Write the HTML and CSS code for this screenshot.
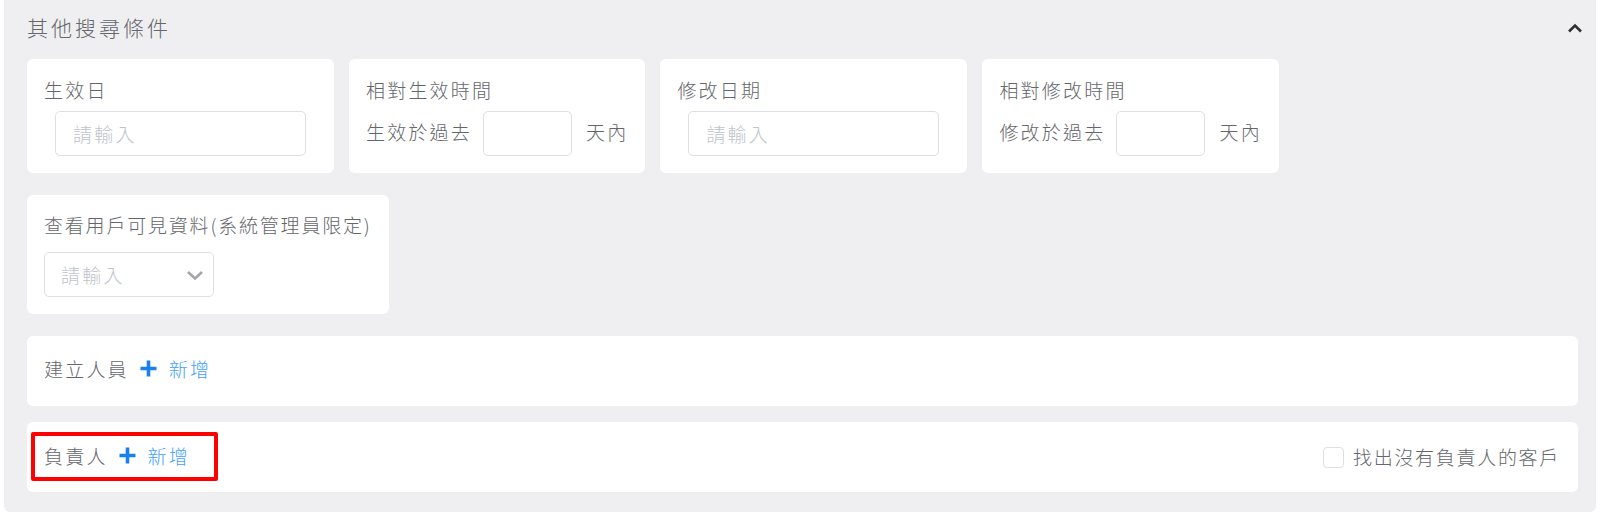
FILE: index.html
```html
<!DOCTYPE html>
<html lang="zh-Hant">
<head>
    <meta charset="UTF-8">
    <meta name="viewport" content="width=device-width, initial-scale=1.0">
    <title>其他搜尋條件</title>
    <link rel="stylesheet" href="styles.css">
</head>
<body>
    <div class="panel">
        <div class="panel-header">
            <h2>其他搜尋條件</h2>
            <svg class="collapse" width="16" height="10" viewBox="0 0 16 10">
                <path d="M2 8.5 L8 2.5 L14 8.5" fill="none" stroke="#303133" stroke-width="2.6"/>
            </svg>
        </div>

        <div class="panel-body">
            <!-- date filters -->
            <div class="card-row">
                <div class="card">
                    <label>生效日</label>
                    <input type="text" class="date-input" placeholder="請輸入">
                </div>
                <div class="card">
                    <label>相對生效時間</label>
                    <div class="range">
                        <span>生效於過去</span>
                        <input type="text" class="days">
                        <span>天內</span>
                    </div>
                </div>
                <div class="card">
                    <label>修改日期</label>
                    <input type="text" class="date-input" placeholder="請輸入">
                </div>
                <div class="card">
                    <label>相對修改時間</label>
                    <div class="range">
                        <span>修改於過去</span>
                        <input type="text" class="days">
                        <span>天內</span>
                    </div>
                </div>
            </div>

            <!-- admin only -->
            <div class="card-row">
                <div class="card card-tall">
                    <label>查看用戶可見資料(系統管理員限定)</label>
                    <div class="select">
                        <span>請輸入</span>
                        <svg width="18" height="11" viewBox="0 0 18 11">
                            <path d="M2 2 L9 8.5 L16 2" fill="none" stroke="#a3a6ad" stroke-width="2.6"/>
                        </svg>
                    </div>
                </div>
            </div>

            <!-- people -->
            <div class="bar">
                <span class="bar-label">建立人員</span>
                <a class="add-link">
                    <svg width="17" height="17" viewBox="0 0 17 17">
                        <path d="M8.5 0.5v16M0.5 8.5h16" stroke="#1a7ff0" stroke-width="3.6"/>
                    </svg>
                    <span>新增</span>
                </a>
            </div>
            <div class="bar bar-owner">
                <div class="highlight">
                    <span class="bar-label">負責人</span>
                    <a class="add-link">
                        <svg width="17" height="17" viewBox="0 0 17 17">
                            <path d="M8.5 0.5v16M0.5 8.5h16" stroke="#1a7ff0" stroke-width="3.6"/>
                        </svg>
                        <span>新增</span>
                    </a>
                </div>
                <label class="check">
                    <span class="box"></span>
                    <span>找出沒有負責人的客戶</span>
                </label>
            </div>
        </div>
    </div>
</body>
</html>
```

FILE: styles.css
```css
body {
    margin: 0;
    background: #fff;
    font-family: "Noto Sans CJK TC", "Noto Sans", sans-serif;
    font-weight: 300;
    color: #64666b;
}
.panel {
    margin: 0 4px;
    background: #efeff1;
    border-radius: 0 0 6px 6px;
    padding-bottom: 20px;
}
.panel-header {
    display: flex;
    justify-content: space-between;
    align-items: center;
    height: 53px;
    margin-bottom: 6px;
    padding: 0 13px 0 23px;
}
.panel-header h2 {
    margin: 0;
    font-size: 21px;
    font-weight: 300;
    letter-spacing: 3px;
    color: #64666b;
}
.collapse {
    margin-top: 3px;
}
.panel-body {
    padding: 0 18px 0 23px;
}
.card-row {
    display: flex;
    gap: 15px;
    margin-bottom: 22px;
}
.card {
    background: #fff;
    border-radius: 6px;
    padding: 18px 17px 17px 17px;
    font-size: 19px;
    letter-spacing: 2.2px;
}
.card label {
    display: block;
    line-height: 25px;
    margin-bottom: 9px;
}
.card-tall {
    padding-top: 17px;
}
.card-tall label {
    margin-bottom: 15px;
    letter-spacing: 1.8px;
}
input {
    box-sizing: border-box;
    height: 45px;
    border: 1px solid #dcdfe6;
    border-radius: 5px;
    font-family: inherit;
    font-size: 19px;
    font-weight: 300;
    letter-spacing: 2.2px;
    color: #606266;
    padding: 0 17px;
    outline: none;
}
input::placeholder {
    color: #c0c4cc;
}
.date-input {
    display: block;
    width: 251px;
    margin: 0 11px;
}
.range {
    display: flex;
    align-items: center;
    height: 45px;
}
.range span {
    line-height: 25px;
    margin-top: -4px;
}
.days {
    width: 89px;
    margin: 0 14px 0 11px;
}
.select {
    box-sizing: border-box;
    width: 170px;
    height: 45px;
    border: 1px solid #dcdfe6;
    border-radius: 5px;
    display: flex;
    justify-content: space-between;
    align-items: center;
    padding: 0 9px 0 16px;
    color: #c0c4cc;
}
.select svg {
    margin-top: 1px;
}
.bar {
    box-sizing: border-box;
    display: flex;
    align-items: center;
    height: 70px;
    background: #fff;
    border-radius: 6px;
    padding: 0 18px 6px 17px;
    margin-bottom: 16px;
    font-size: 19px;
    letter-spacing: 2.2px;
}
.bar:last-child {
    margin-bottom: 0;
}
.add-link {
    display: flex;
    align-items: center;
    color: #409eff;
    cursor: pointer;
    margin-left: 11px;
}
.add-link span {
    margin-left: 12px;
}
.bar-owner {
    padding-left: 4px;
    padding-bottom: 1px;
    justify-content: space-between;
}
.highlight {
    box-sizing: border-box;
    display: flex;
    align-items: center;
    height: 49px;
    border: 4px solid #ff0000;
    border-radius: 2px;
    padding: 0 24px 2px 9px;
}
.check {
    display: flex;
    align-items: center;
    letter-spacing: 1.7px;
}
.box {
    box-sizing: border-box;
    width: 21px;
    height: 21px;
    border: 1px solid #dcdfe6;
    border-radius: 4px;
    margin-right: 9px;
    margin-top: 2px;
}
```
